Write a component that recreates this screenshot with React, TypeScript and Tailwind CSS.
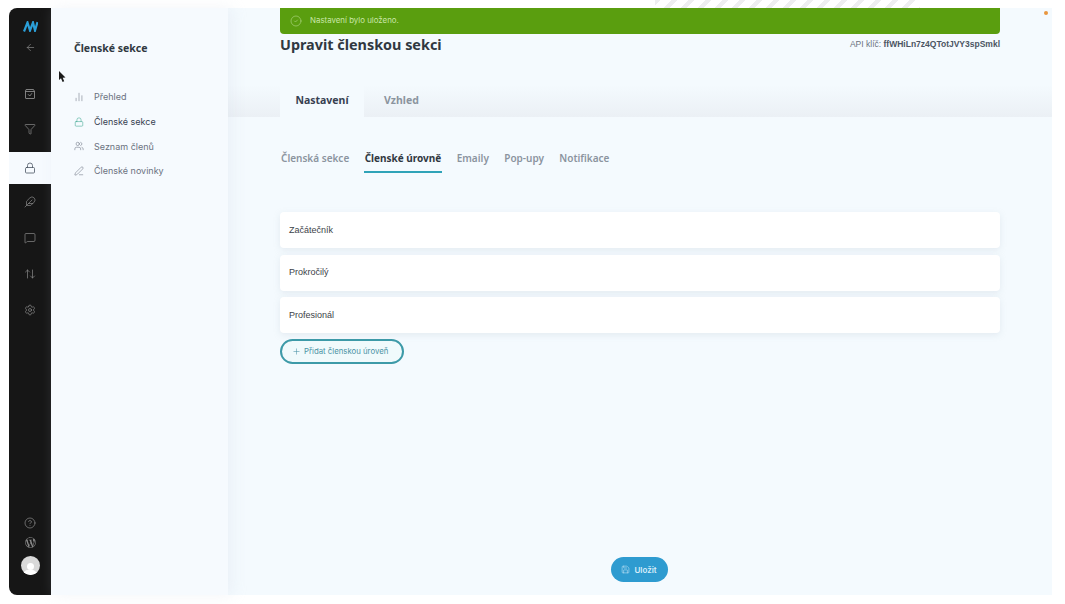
import { ArrowLeft, ArrowUpDown, ChartNoAxesColumn, CheckCircle2, CircleHelp, Filter, Lock, MessageSquare, PenLine, Plus, Save, Settings, Users, Feather } from "lucide-react";
import { FaWordpressSimple } from "react-icons/fa";

const sideItems = [
  { label: "Přehled", icon: ChartNoAxesColumn },
  { label: "Členské sekce", icon: Lock, active: true },
  { label: "Seznam členů", icon: Users },
  { label: "Členské novinky", icon: PenLine },
];

const subTabs = ["Členská sekce", "Členské úrovně", "Emaily", "Pop-upy", "Notifikace"];
const levels = ["Začátečník", "Prokročilý", "Profesionál"];

function Logo() {
  return (
    <svg width="15" height="11" viewBox="0 0 15 11" fill="none" stroke="#2b9fd8" strokeWidth="2.2">
      <path d="M1 10.5 4.5 1.5 7 9.5 10 1.5 12 9.5 14.5 1" />
    </svg>
  );
}

function BoxCheck() {
  return (
    <svg className="mt-[35px]" width="12" height="12" viewBox="0 0 24 24" fill="none" stroke="currentColor" strokeWidth="1.8" strokeLinejoin="round" strokeLinecap="round">
      <path d="M5 3h14l2 4v13a1 1 0 0 1-1 1H4a1 1 0 0 1-1-1V7z" />
      <path d="M3 7h18" />
      <path d="m8.5 13 3 3 4-5" />
    </svg>
  );
}

function Rail() {
  return (
    <div className="w-[42px] shrink-0 flex flex-col">
      <div className="h-[144px] bg-[#161616] rounded-tl-lg flex flex-col items-center text-[#8b8b8b]">
        <div className="mt-[13px] h-[11px]">
          <Logo />
        </div>
        <ArrowLeft className="mt-[10px]" size={11} strokeWidth={1.5} />
        <BoxCheck />
        <Filter className="mt-[23px]" size={12} strokeWidth={1.4} />
      </div>
      <div className="h-[32px] bg-[#f6fafe] flex items-center justify-center text-[#4b5563]">
        <Lock size={12} strokeWidth={1.6} />
      </div>
      <div className="flex-1 bg-[#161616] rounded-bl-lg flex flex-col items-center text-[#8b8b8b]">
        <Feather className="mt-[12px]" size={12} strokeWidth={1.4} />
        <MessageSquare className="mt-[24px]" size={12} strokeWidth={1.4} />
        <ArrowUpDown className="mt-[24px]" size={12} strokeWidth={1.4} />
        <Settings className="mt-[24px]" size={12} strokeWidth={1.4} />
        <CircleHelp className="mt-auto" size={12} strokeWidth={1.4} />
        <FaWordpressSimple className="mt-[8px]" size={11} />
        <div className="mt-[8px] mb-[20px] w-[19px] h-[19px] rounded-full bg-[#d9d9d9] overflow-hidden flex flex-col items-center justify-end">
          <div className="w-[7px] h-[7px] rounded-full bg-white" />
          <div className="w-[14px] h-[5px] rounded-t-full bg-white" />
        </div>
      </div>
    </div>
  );
}

function Sidebar() {
  return (
    <div className="w-[177px] shrink-0 bg-[#f6fafe] shadow-[4px_0_14px_rgba(200,210,225,0.22)] pl-[23px] pt-[33px] z-10">
      <div className="font-['Noto_Sans',sans-serif] font-bold text-[10.5px] leading-[14px] text-[#303841]">Členské sekce</div>
      <div className="mt-[32px] flex flex-col gap-[4.7px]">
        {sideItems.map((item) => {
          const Icon = item.icon;
          return (
            <div key={item.label} className="h-[20px] flex items-center font-['Inter',sans-serif] text-[9px]">
              <Icon size={10} strokeWidth={1.3} className={item.active ? "text-[#3aa58f]" : "text-[#6b7280]"} />
              <span className={item.active ? "ml-[10px] text-[#374151]" : "ml-[10px] text-[#6b7280]"}>{item.label}</span>
            </div>
          );
        })}
      </div>
    </div>
  );
}

function Main() {
  return (
    <div className="flex-1 min-w-0 bg-[#f4fafe] relative flex flex-col">
      <div className="absolute top-[3px] right-[4px] w-[4px] h-[4px] rounded-full bg-[#e8963f]" />
      <div className="px-[52px]">
        <div className="h-[26px] bg-[#5a9e0f] rounded-b-sm flex items-center pl-[10px] font-['Inter',sans-serif] text-[7.9px] text-[#c9e6a8]">
          <CheckCircle2 size={12} strokeWidth={1.2} className="text-[#b4da8c]" />
          <span className="ml-[8px]">Nastavení bylo uloženo.</span>
        </div>
        <div className="flex items-center justify-between h-[20px] mt-[1px]">
          <div className="font-['Noto_Sans',sans-serif] font-bold text-[14.4px] text-[#303841]">Upravit členskou sekci</div>
          <div className="font-['Liberation_Sans',sans-serif] text-[8.5px] text-[#6b7280] mt-[-1px]">
            API klíč: <span className="font-bold text-[#4b5563]">ffWHiLn7z4QTotJVY3spSmkl</span>
          </div>
        </div>
      </div>
      <div className="mt-[30px] h-[32px] bg-gradient-to-b from-[#f4fafe] to-[#ebf0f5] px-[52px] flex font-['Noto_Sans',sans-serif] font-bold text-[10.5px]">
        <div className="w-[84px] bg-[#f4fafe] flex items-center justify-center text-[#374151]">Nastavení</div>
        <div className="ml-[20px] flex items-center text-[#8b949e]">Vzhled</div>
      </div>
      <div className="px-[52px] flex-1 flex flex-col">
        <div className="mt-[31px] flex gap-[13.4px] font-['Noto_Sans',sans-serif] font-semibold text-[10px] text-[#8b949e]">
          {subTabs.map((t, i) => (
            <div
              key={t}
              className={i === 1 ? "h-[25px] pt-[3px] px-[1px] text-[#303841] font-bold border-b-2 border-[#2fa3b8]" : "h-[25px] pt-[3px] px-[1px]"}
            >
              {t}
            </div>
          ))}
        </div>
        <div className="mt-[39px] flex flex-col gap-[6.5px]">
          {levels.map((l) => (
            <div
              key={l}
              className="h-[36px] bg-white rounded-sm shadow-[0_2px_6px_rgba(180,190,205,0.25)] flex items-center pl-[9px] pt-[1px] font-['Liberation_Sans',sans-serif] text-[9px] text-[#3c4248]"
            >
              {l}
            </div>
          ))}
        </div>
        <div className="mt-[6px] w-[124px] h-[25px] rounded-full border-2 border-[#3d9aa8] bg-[#f0fafc] flex items-center pl-[10px] font-['Inter',sans-serif] text-[7.8px] text-[#4b93a5]">
          <Plus size={9} strokeWidth={1.5} />
          <span className="ml-[3px]">Přidat členskou úroveň</span>
        </div>
        <div className="mt-auto mb-[13px] self-center ml-[-2px] w-[57px] h-[25px] rounded-full bg-[#2e9bd0] flex items-center justify-center font-['Inter',sans-serif] font-semibold text-[8px] text-[#d8eefa]">
          <Save size={9} strokeWidth={1.3} />
          <span className="ml-[4px]">Uložit</span>
        </div>
      </div>
    </div>
  );
}

export default function App() {
  return (
    <div className="relative w-[1065px] h-[604px] bg-white overflow-hidden flex flex-col">
      <div className="h-2 flex">
        <div className="ml-[655px] w-[265px] h-2 bg-[repeating-linear-gradient(135deg,#eeeef0_0px,#eeeef0_4px,transparent_4px,transparent_12px)]" />
      </div>
      <div className="ml-[9px] w-[1043px] h-[587px] flex">
        <Rail />
        <Sidebar />
        <Main />
      </div>
      <svg className="absolute left-[58px] top-[71px] z-20" width="8" height="12" viewBox="0 0 8 12" fill="#1a1a1a">
        <path d="M1 0v9l2-1.8L4.6 11l1.6-.7L4.7 6.8 7.5 6.5z" />
      </svg>
    </div>
  );
}
